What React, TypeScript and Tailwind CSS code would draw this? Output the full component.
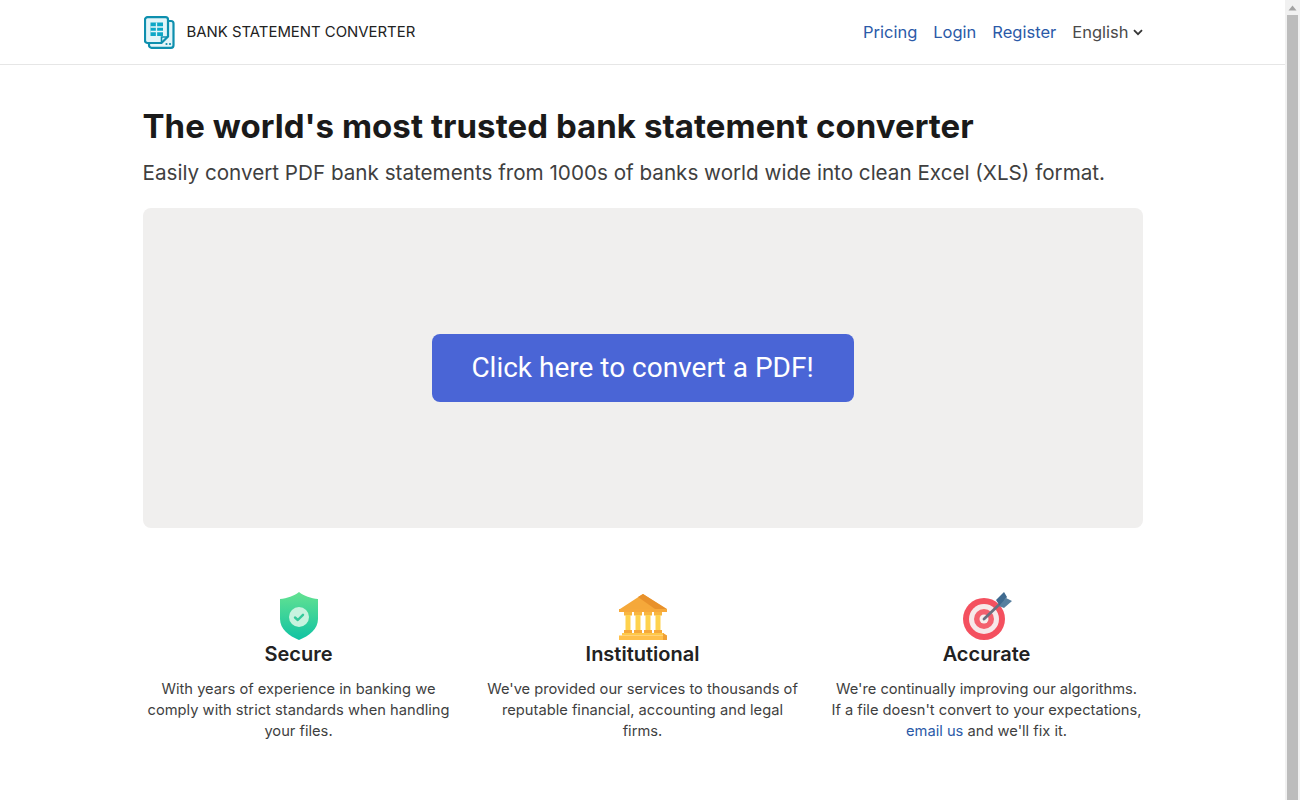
import React from "react";

function Logo() {
  return (
    <svg width="31" height="33" viewBox="0 0 31 33" fill="none">
      <rect x="5" y="5" width="24.500" height="26.800" rx="2.500" fill="#e3f5f9" stroke="#0d8fae" strokeWidth="2.200" />
      <path d="M3.500 1.200H21.500a2.500 2.500 0 0 1 2.500 2.500V20.500l-6.500 6.500H3.500A2.500 2.500 0 0 1 1 24.500V3.700a2.500 2.500 0 0 1 2.500-2.500Z" fill="#e3f5f9" stroke="#0d8fae" strokeWidth="2.200" />
      <rect x="6.500" y="6.500" width="12.500" height="13.500" fill="#0da7c7" />
      <path d="M6.500 11H19M6.500 15.500H19M12.500 6.500V20" stroke="#e3f5f9" strokeWidth="1.300" />
      <path d="M17.500 27V21H24" stroke="#0d8fae" strokeWidth="1.600" />
      <circle cx="22.500" cy="28" r="1.100" fill="#0d8fae" />
      <circle cx="26" cy="28" r="1.100" fill="#0d8fae" />
    </svg>
  );
}

function Shield() {
  return (
    <svg width="38" height="48" viewBox="0 0 38 48">
      <defs>
        <linearGradient id="sg" x1="0" y1="0" x2="0" y2="1">
          <stop offset="0" stopColor="#64e291" />
          <stop offset="1" stopColor="#10c3a3" />
        </linearGradient>
      </defs>
      <path d="M19 0C24 4 31 6.500 38 7V27C38 37 29 44 19 48C9 44 0 37 0 27V7C7 6.500 14 4 19 0Z" fill="url(#sg)" />
      <circle cx="19" cy="25" r="10" fill="#c8f3df" />
      <path d="M15 25.500L17.800 28L23 22.800" fill="none" stroke="#35c99b" strokeWidth="2.400" strokeLinecap="round" strokeLinejoin="round" />
    </svg>
  );
}

function Bank() {
  return (
    <svg width="48" height="46" viewBox="0 0 48 46">
      <path d="M24 0L47 15H1Z" fill="#f5a83a" />
      <path d="M24 0L48 15H36L19 3Z" fill="#e8912b" />
      <rect x="0" y="15" width="48" height="3" fill="#f7a93a" />
      {[6, 16, 26, 36].map((x) => (
        <g key={x}>
          <rect x={x - 1} y="18" width="8" height="3.500" fill="#f8b640" />
          <rect x={x + 0.500} y="21" width="5" height="15" fill="#ffd24d" />
          <rect x={x - 1} y="36" width="8" height="3.500" fill="#f5a83a" />
        </g>
      ))}
      <rect x="3" y="39" width="42" height="2.500" fill="#ffc94a" />
      <rect x="0" y="41.500" width="48" height="4.500" fill="#ffc04a" />
      <path d="M44 39L48 41.500V46H44Z" fill="#f0a035" />
    </svg>
  );
}

function Target() {
  return (
    <svg width="50" height="48" viewBox="0 0 50 48">
      <circle cx="22" cy="27" r="21" fill="#f4505f" />
      <circle cx="22" cy="27" r="15" fill="#f7e8ea" />
      <circle cx="22" cy="27" r="10" fill="#f4606e" />
      <circle cx="22" cy="27" r="4.500" fill="#f7eeee" />
      <path d="M22 27L41 9" stroke="#6a6f80" strokeWidth="2.800" strokeLinecap="round" />
      <path d="M34 8L42 0L45 5L38 14Z" fill="#3f6a8f" />
      <path d="M37 14L44 6L50 9L42 16Z" fill="#587f9f" />
    </svg>
  );
}

const cols = [
  { icon: <Shield />, title: "Secure", body: <>With years of experience in banking we comply with strict standards when handling your files.</> },
  { icon: <Bank />, title: "Institutional", body: <>We've provided our services to thousands of reputable financial, accounting and legal firms.</> },
  {
    icon: <Target />,
    title: "Accurate",
    body: (
      <>
        We're continually improving our algorithms.<br />If a file doesn't convert to your expectations,{" "}
        <a className="text-[#2b5aa8]" href="#">email us</a> and we'll fix it.
      </>
    ),
  },
];

export default function App() {
  return (
    <div className="flex h-screen overflow-hidden bg-white text-[#363636] font-['Inter','Liberation_Sans',sans-serif]">
      <div className="min-w-0 flex-1">
        <nav className="h-[65px] border-b border-[#e6e6e6]">
          <div className="mx-auto flex h-16 w-[1000px] items-center justify-between">
            <div className="ml-[1px] flex items-center gap-[12px]">
              <Logo />
              <span className="pt-[1px] text-[14.900px] text-[#222]">BANK STATEMENT CONVERTER</span>
            </div>
            <div className="flex items-center gap-4 text-[16.500px]">
              <a className="text-[#2b5aa8]" href="#">Pricing</a>
              <a className="text-[#2b5aa8]" href="#">Login</a>
              <a className="text-[#2b5aa8]" href="#">Register</a>
              <span className="flex items-center gap-[4px] text-[#4a4a4a]">
                English
                <svg width="10" height="7" viewBox="0 0 10 7" fill="none"><path d="M1 1.200L5 5.200L9 1.200" stroke="#363636" strokeWidth="1.800" /></svg>
              </span>
            </div>
          </div>
        </nav>
        <main className="mx-auto w-[1000px]">
          <h1 className="mt-[39px] text-[33px] leading-[44px] font-bold tracking-[0.05px] whitespace-nowrap text-[#1a1a1a]">The world's most trusted bank statement converter</h1>
          <p className="mt-[10px] text-[20.650px] leading-[30px] whitespace-nowrap text-[#3f3f3f]">Easily convert PDF bank statements from 1000s of banks world wide into clean Excel (XLS) format.</p>
          <div className="mt-[20px] flex h-80 items-center justify-center rounded-lg bg-[#f0efee]">
            <button className="h-[68px] w-[422px] rounded-lg bg-[#4a65d6] font-['Roboto',sans-serif] text-[28px] text-white">Click here to convert a PDF!</button>
          </div>
          <div className="mt-[64px] grid grid-cols-3 gap-8">
            {cols.map((c) => (
              <div key={c.title} className="flex flex-col items-center text-center">
                <div className="flex h-12 items-end">{c.icon}</div>
                <h3 className="text-[20px] leading-[28px] font-semibold text-[#222]">{c.title}</h3>
                <p className="mt-[11px] text-[14.700px] leading-[21px] text-[#3f3f3f]">{c.body}</p>
              </div>
            ))}
          </div>
        </main>
      </div>
      <div className="flex w-[15px] shrink-0 flex-col items-center bg-[#f1f1f1]">
        <div className="flex h-[15px] items-center justify-center">
          <svg width="9" height="6" viewBox="0 0 9 6"><path d="M4.500 0.500L8.500 5.500H0.500Z" fill="#a3a3a3" /></svg>
        </div>
        <div className="w-[11px] flex-1 bg-[#bcbcbc]" />
      </div>
    </div>
  );
}
